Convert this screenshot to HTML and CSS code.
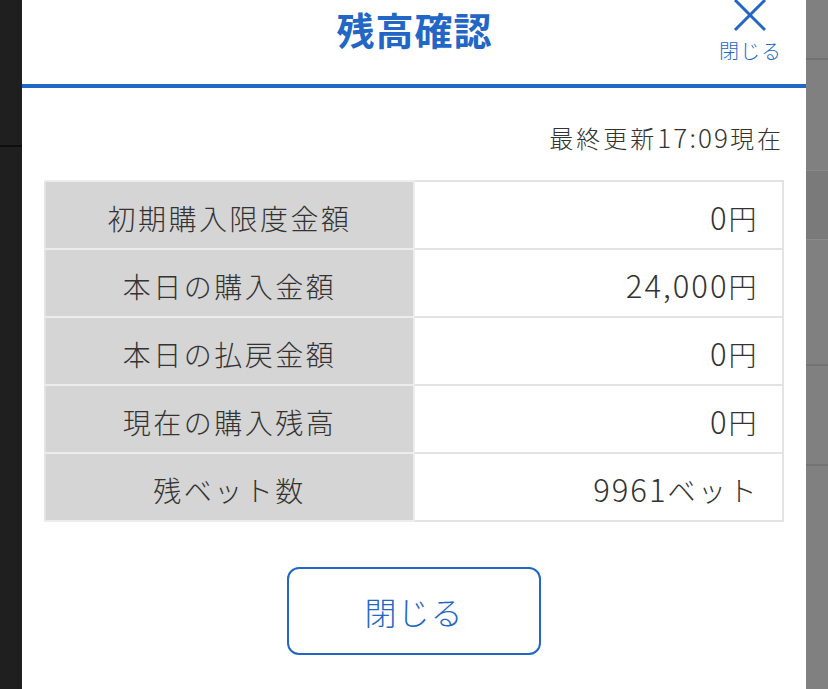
FILE: index.html
```html
<!DOCTYPE html>
<html lang="ja">
<head>
<meta charset="utf-8">
<title>残高確認</title>
<link rel="stylesheet" href="styles.css">
</head>
<body>
<div class="screen">
  <div class="side side-left">
    <div class="seg seg-l1"></div>
  </div>
  <div class="modal">
    <header class="modal-header">
      <div class="spacer"></div>
      <h1 class="title">残高確認</h1>
      <button class="close-top" type="button">
        <svg class="close-x" width="34" height="34" viewBox="0 0 34 34" aria-hidden="true">
          <path d="M2 2 L32 32 M32 2 L2 32" stroke="#2367c6" stroke-width="3" fill="none"/>
        </svg>
        <span class="close-label">閉じる</span>
      </button>
    </header>
    <div class="modal-body">
      <p class="updated">最終更新<span class="num">17:09</span>現在</p>
      <table class="balance">
        <tr><th>初期購入限度金額</th><td><span class="num">0</span>円</td></tr>
        <tr><th>本日の購入金額</th><td><span class="num">24,000</span>円</td></tr>
        <tr><th>本日の払戻金額</th><td><span class="num">0</span>円</td></tr>
        <tr><th>現在の購入残高</th><td><span class="num">0</span>円</td></tr>
        <tr><th>残ベット数</th><td><span class="num">9961</span>ベット</td></tr>
      </table>
      <button class="close-btn" type="button">閉じる</button>
    </div>
  </div>
  <div class="side side-right">
    <div class="seg seg-r1"></div>
    <div class="seg seg-r2"></div>
    <div class="seg seg-r3"></div>
    <div class="seg seg-r4"></div>
    <div class="seg seg-r5"></div>
  </div>
</div>
</body>
</html>
```
FILE: styles.css
```css
html, body {
  margin: 0;
  padding: 0;
  height: 100%;
  overflow: hidden;
}
body {
  font-family: "Noto Sans CJK JP", "Noto Sans", sans-serif;
  color: #333;
}
.screen {
  display: flex;
  height: 689px;
}
.side {
  width: 22px;
  flex: none;
  display: flex;
  flex-direction: column;
}
.side-left {
  background: #1f1f1f;
}
.seg-l1 {
  height: 145px;
  border-bottom: 2px solid #0e0e0e;
}
.side-right {
  background: #808080;
}
.seg-r1 {
  height: 58px;
  border-bottom: 2px solid #727272;
}
.seg-r2 {
  height: 110px;
  border-bottom: 1px solid #888;
}
.seg-r3 {
  height: 68px;
  background: #7a7a7a;
  border-bottom: 1px solid #8a8a8a;
}
.seg-r4 {
  height: 124px;
  border-bottom: 2px solid #737373;
}
.seg-r5 {
  height: 98px;
  border-bottom: 2px solid #737373;
}
.modal {
  flex: 1;
  background: #fff;
  display: flex;
  flex-direction: column;
}
.modal-header {
  height: 84px;
  border-bottom: 4px solid #2367c6;
  display: grid;
  grid-template-columns: 1fr auto 1fr;
  padding: 0 24px 0 24px;
  align-items: start;
}
.title {
  margin: 10px 0 0;
  font-size: 38px;
  line-height: 38px;
  font-weight: 700;
  color: #2367c6;
  letter-spacing: 1px;
  padding-left: 1px;
}
.close-top {
  justify-self: end;
  background: none;
  border: 0;
  padding: 0;
  margin: -2px 0 0;
  display: flex;
  flex-direction: column;
  align-items: center;
  font-family: inherit;
  cursor: pointer;
}
.close-x {
  display: block;
}
.close-label {
  margin-top: 7px;
  font-size: 20px;
  line-height: 24px;
  font-weight: 300;
  color: #2367c6;
  letter-spacing: 1px;
  padding-left: 1px;
}
.modal-body {
  padding: 0 22px;
}
.updated {
  margin: 34px 0 0;
  text-align: right;
  font-size: 24px;
  line-height: 32px;
  font-weight: 300;
  letter-spacing: 3px;
  padding-right: 0;
  color: #333;
}
.updated .num {
  font-size: 26px;
  line-height: 0;
  letter-spacing: 2.1px;
}
.balance {
  margin-top: 26px;
  width: 100%;
  border-collapse: collapse;
  table-layout: fixed;
  border: 2px solid #e3e3e3;
}
.balance th,
.balance td {
  border: 2px solid #e3e3e3;
  height: 68px;
  padding: 6px 0 0;
  box-sizing: border-box;
  font-size: 28px;
  line-height: 40px;
  font-weight: 300;
  color: #333;
  letter-spacing: 2.5px;
}
.balance th {
  background: #d5d5d5;
  text-align: center;
  border-color: #ececec;
  border-left-color: #e3e3e3;
}
.balance td {
  background: #fff;
  text-align: right;
  padding-right: 23px;
}
.balance td .num {
  font-size: 31px;
  line-height: 0;
  letter-spacing: 2px;
}
.close-btn {
  display: block;
  margin: 45px auto 0;
  width: 254px;
  height: 88px;
  border: 2.5px solid #2367c6;
  border-radius: 12px;
  background: #fff;
  color: #2367c6;
  font-family: inherit;
  font-size: 32px;
  font-weight: 300;
  letter-spacing: 1px;
  cursor: pointer;
}
```
